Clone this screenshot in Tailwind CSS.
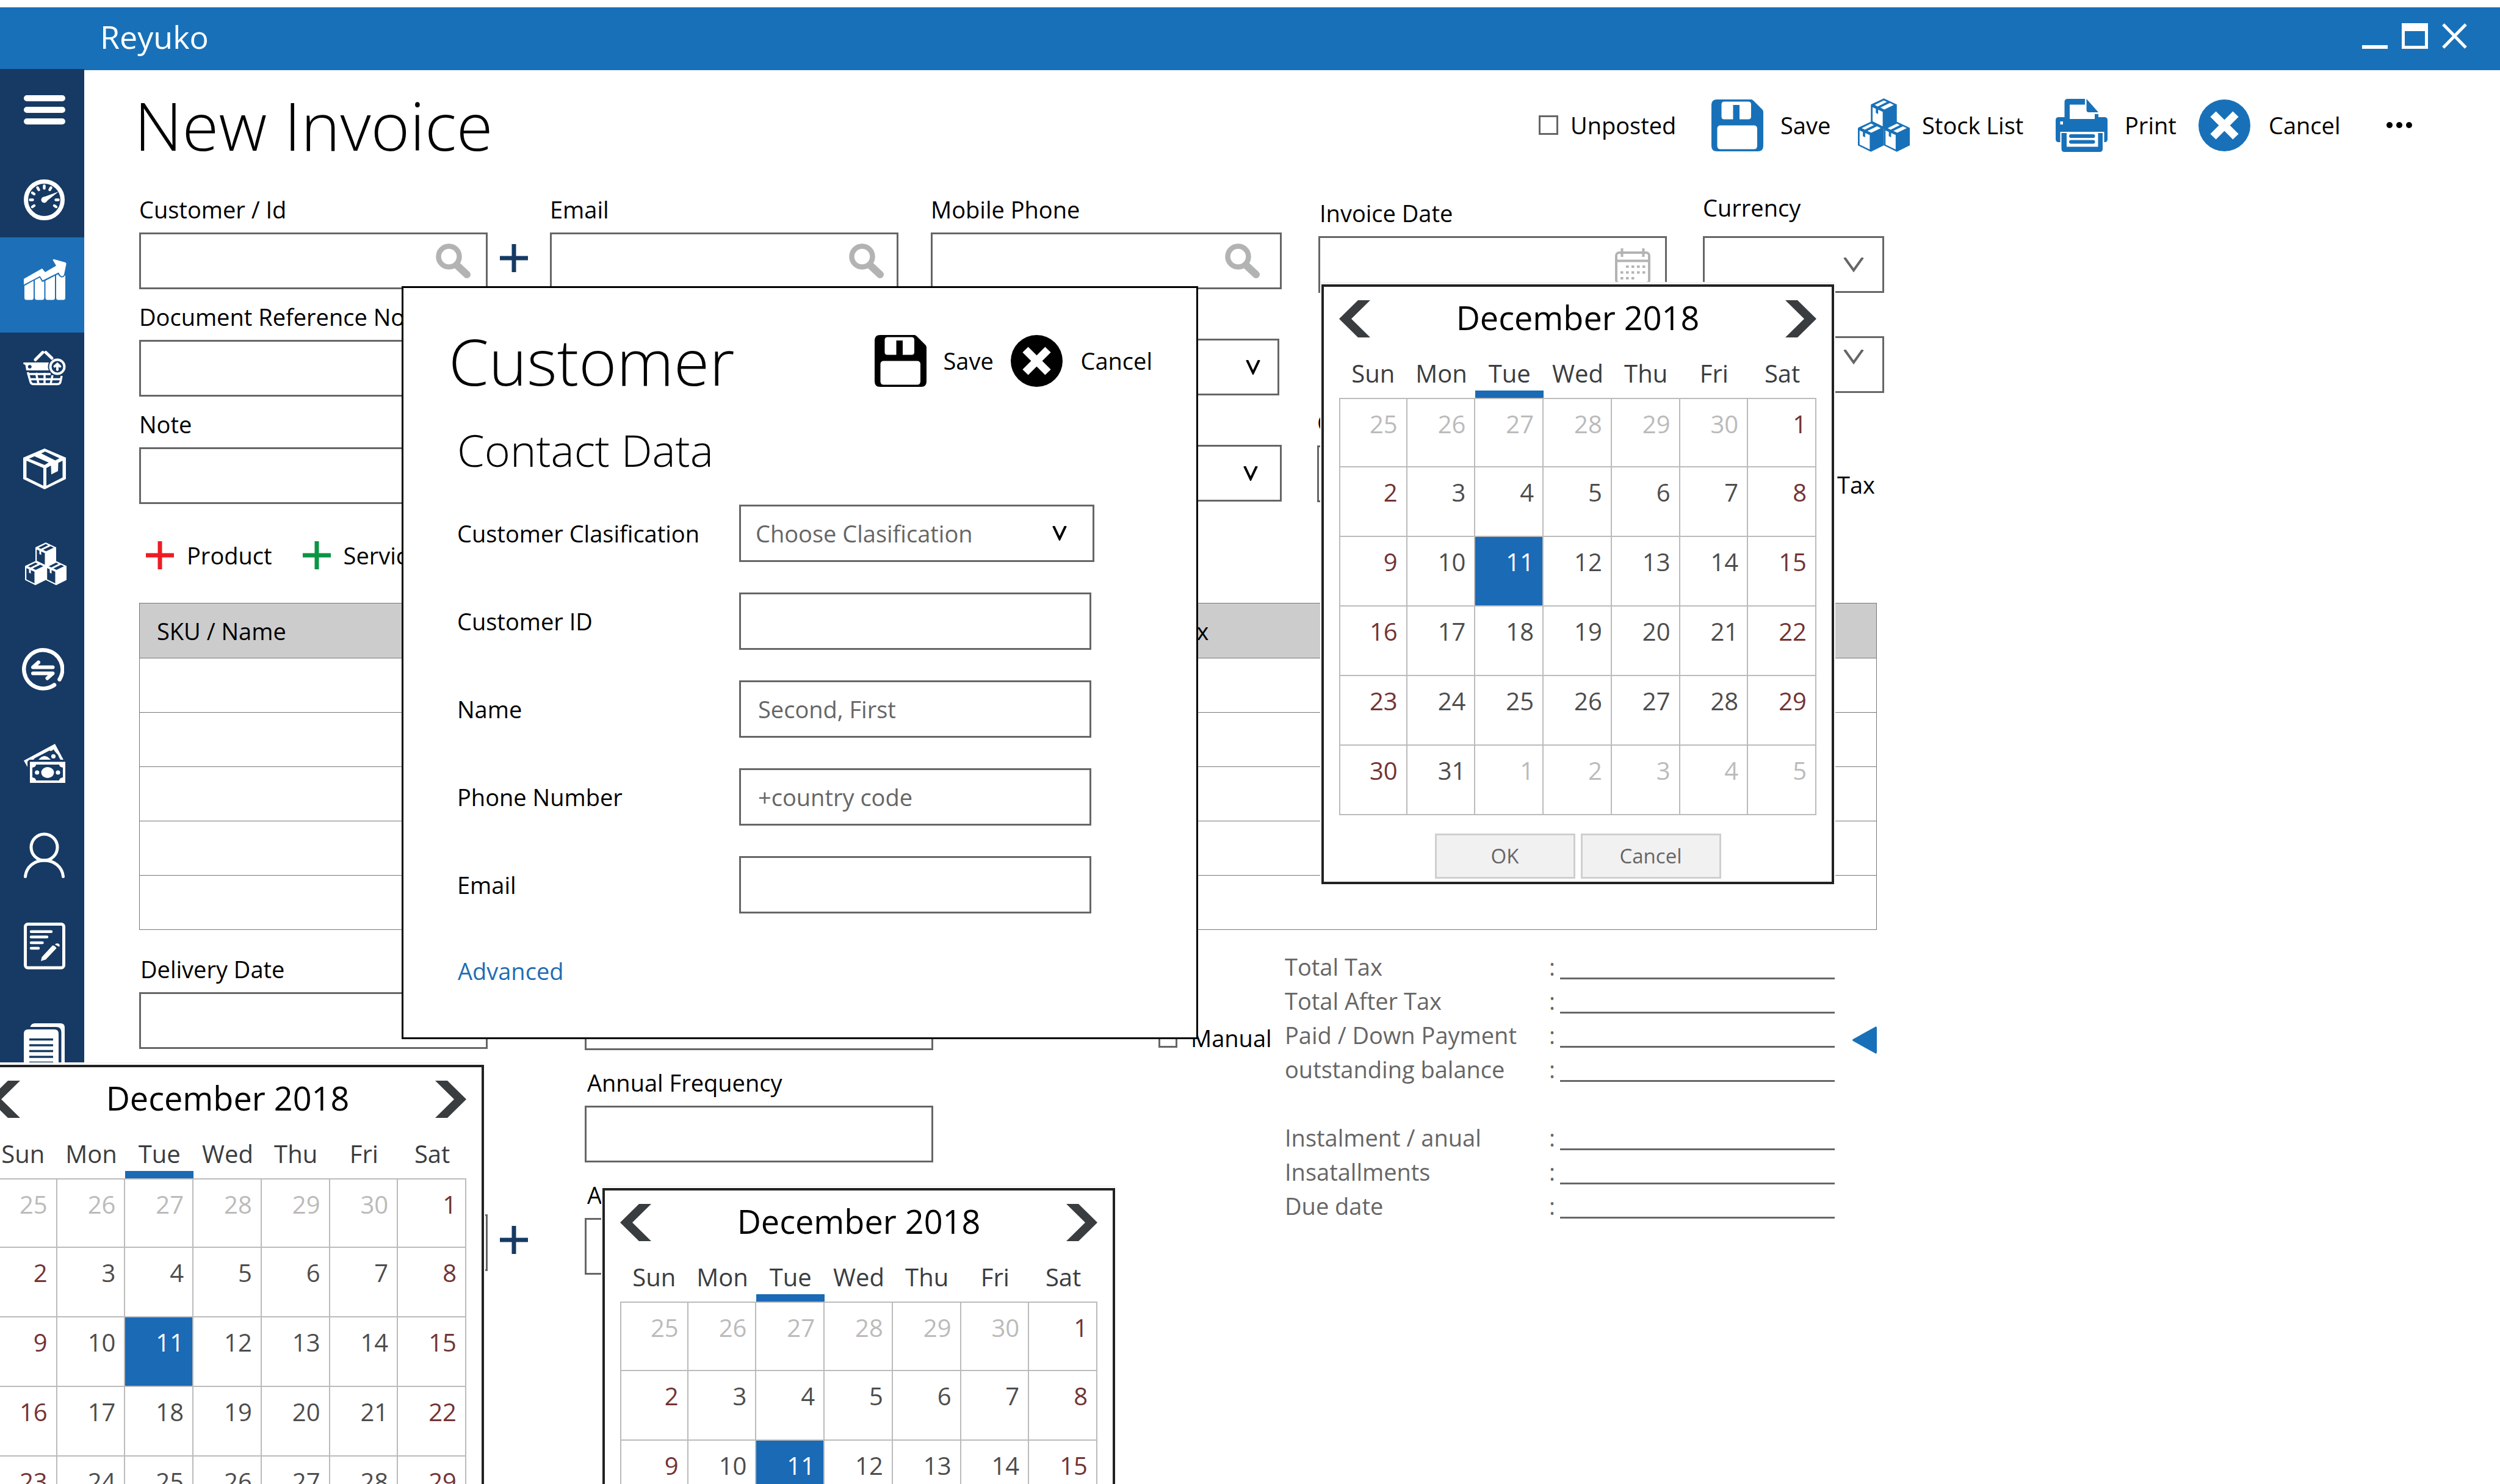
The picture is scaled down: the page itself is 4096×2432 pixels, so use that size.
<!DOCTYPE html>
<html lang="en">
<head>
<meta charset="utf-8">
<title>Reyuko - New Invoice</title>
<script src="https://cdn.jsdelivr.net/npm/@tailwindcss/browser@4"></script>
</head>
<body class="bg-white">
<!-- icon library -->
<svg class="hidden" aria-hidden="true">
  <symbol id="i-menu" viewBox="0 0 68 48"><path d="M5 5H63M5 24H63M5 43H63" stroke="currentColor" stroke-width="10" stroke-linecap="round"/></symbol>
  <symbol id="i-gauge" viewBox="0 0 67 67">
    <circle cx="33.5" cy="33.5" r="30" fill="none" stroke="currentColor" stroke-width="7"/>
    <path d="M10.5 33.500h4M56.500 33.500h-4M33.500 10.500v4M14 22l3 2M14 45l3-2M53 45l-3-2M22.500 13.500l2 3.500M44.500 13.500l-2 3.500" stroke="currentColor" stroke-width="4.500" stroke-linecap="round"/>
    <path d="M31 29.500 57 20 37 36z" fill="currentColor"/><circle cx="33.500" cy="33.500" r="5" fill="currentColor"/>
  </symbol>
  <symbol id="i-chart" viewBox="0 0 70 67">
    <path fill="currentColor" d="M0 32 30 15 35 21 53 10.500 47.500 1Q48-.5 50 0L68 5Q70 6 69.500 8L66 25Q63 31 59 25L57 21.500 31 34.500 26.500 27.500 0 41.500z"/>
    <path fill="currentColor" d="M1 43.500 16 35V63Q16 66.500 12.500 66.500H4.500Q1 66.500 1 63zM18 34 26 30 30 37 33.500 36V63Q33.500 66.500 30 66.500H22Q18 66.500 18 63zM35.500 35 51 27V63Q51 66.500 47.500 66.500H39Q35.500 66.500 35.500 63zM53 26 56 24.500Q62 34 68 26V63Q68 66.500 64.500 66.500H56.500Q53 66.500 53 63z"/>
  </symbol>
  <symbol id="i-basket" viewBox="0 0 70 57">
    <path d="M20 14.500 32 2.500M37 2.500 47 12" stroke="currentColor" stroke-width="5" stroke-linecap="round"/>
    <path fill="currentColor" fill-rule="evenodd" d="M1 19H42Q39 26 42 32H5L3.500 23 1 22Q-1 20 1 19zM10.700 23a3 3 0 1 0 .1 0z"/>
    <path fill="none" stroke="currentColor" stroke-width="3.500" d="M7.500 35 12 51Q13 54.500 17 54.500H56Q60 54.500 61 51L63 41M8 38H45M10 46.500H62M21 36 25 54M35 36V54M48 40 45 54"/>
    <circle cx="56" cy="26" r="11.500" fill="none" stroke="currentColor" stroke-width="4"/>
    <path fill="none" stroke="currentColor" stroke-width="4" stroke-linecap="round" d="M56 31V22M51.500 25.500 56 21.500 60.500 25.500"/>
  </symbol>
  <symbol id="i-box" viewBox="0 0 70 67"><path fill="currentColor" fill-rule="evenodd" d="M35 0 70 15V50L35 67 0 50V15zM5.400 20V47.500L33 61V32zM38 32V61L64.500 47.500V20L57.500 23.500 57 37 46 42.500 45.500 28zM9.500 16.700 35 27 41.700 23 18.500 12.700zM29.500 8 52.500 19.600 59.500 16 36 5z"/></symbol>
  <defs><path id="unit" fill-rule="evenodd" d="M17 0 34 8V31L17 39.500 0 31V8zM2.200 11.500V30L15.500 36.500V17.500L9.500 14.800V20.500L6.500 19V13.500zM5 8.500 9 10.500 21 4.500 17 2.500zM12.500 12 17.500 14.500 30 8.500 25 6z"/></defs>
  <symbol id="i-crates" viewBox="0 0 68 70">
    <g fill="currentColor">
      <use href="#unit" x="17" y="0"/><use href="#unit" x="0" y="30.500"/><use href="#unit" x="34" y="30.500"/>
    </g>
  </symbol>
  <symbol id="i-exchange" viewBox="0 0 69 71"><path fill="none" stroke="currentColor" stroke-width="6.500" stroke-linecap="round" stroke-linejoin="round" d="M61.500 51.500A31.500 31.500 0 1 0 53 60.500"/><path fill="none" stroke="currentColor" stroke-width="6" stroke-linecap="round" stroke-linejoin="round" d="M50.500 31.500H18L27 23.500M18 41.500H50.500L41.500 49.500"/></symbol>
  <symbol id="i-money" viewBox="0 0 68 64">
    <path fill="currentColor" fill-rule="evenodd" d="M0 27.500 51 0 65 26H60Q57 21 56 18 50 12 49 9 45 13 42 11L18 23.500 16 26H9L6 29V38z"/>
    <path fill="currentColor" d="M24 26Q34 14 44 26z"/><circle cx="48.500" cy="20.500" r="3.600" fill="currentColor"/>
    <path fill="currentColor" fill-rule="evenodd" d="M10 29.500H68V64H10zM20 34Q20 38 14 39V55Q20 56 20 60H58Q58 56 64 55V39Q58 38 58 34z"/>
    <ellipse cx="39" cy="47" rx="10.500" ry="9" fill="currentColor"/><circle cx="21.700" cy="47" r="3.600" fill="currentColor"/><circle cx="56" cy="47" r="3.600" fill="currentColor"/>
  </symbol>
  <symbol id="i-person" viewBox="0 0 67 75"><g fill="none" stroke="currentColor" stroke-width="5" stroke-linecap="round"><circle cx="33.500" cy="24.500" r="21.500"/><path d="M2.500 72.500C4 57 17 46 33.500 46S63 57 64.500 72.500"/></g></symbol>
  <symbol id="i-note" viewBox="0 0 68 77">
    <rect x="2.500" y="2.500" width="63" height="71.500" rx="4" fill="none" stroke="currentColor" stroke-width="5"/>
    <path d="M12 14.700H45M12 23.500H38M12 33H30.500M12 42H24" stroke="currentColor" stroke-width="4.500" stroke-linecap="round"/>
    <path fill="currentColor" d="M28 63 29.500 56.500 47 37.500Q51 37 53.500 42L36 60.500zM51 36Q53 33 57 34.500 60 37 58 39.500z"/>
  </symbol>
  <symbol id="i-docs" viewBox="0 0 67 84">
    <path fill="currentColor" d="M10.500 6Q12 0 18 0H60Q67 0 67 7V84H61.500V15Q61.500 6 53 6z"/>
    <path fill="currentColor" fill-rule="evenodd" d="M0 17Q0 10 7 10H50Q57 10 57 17V84H0zM9 24.700V28.300H48V24.700zM9 34.200V37.800H48V34.200zM9 43.700V47.300H48V43.700zM9 53.200V56.800H48V53.200zM9 62.700V66.300H48V62.700z"/>
  </symbol>
  <symbol id="i-save" viewBox="0 0 85 85"><path fill="currentColor" fill-rule="evenodd" d="M9 0H66L69 2 84 17 85 20V76Q85 85 76 85H9Q0 85 0 76V9Q0 0 9 0zM21 3.500Q16.500 3.500 16.500 8V28Q16.500 32.500 21 32.500H60.500Q65 32.500 65 28V8Q65 3.500 60.500 3.500zM35.500 9H46V32.500H35.500zM15 42.500Q9.500 42.500 9.500 48V76Q9.500 81.500 15 81.500H69.500Q75 81.500 75 76V48Q75 42.500 69.500 42.500z"/></symbol>
  <symbol id="i-print" viewBox="0 0 85 87">
    <path fill="currentColor" fill-rule="evenodd" d="M5 30H14.500V5Q14.500 0 20 0H48V9.500H23V33H64V25H70V30H80Q85 30 85 35V66Q85 71 80 71H79.500V54H7.500V71H5Q0 71 0 66V35Q0 30 5 30zM7.500 37V42H12V37z"/>
    <path fill="currentColor" d="M50.500 0 70 22H54Q50.500 22 50.500 18z"/>
    <path fill="currentColor" d="M9.500 56H18V78.500H69.500V56H77V82Q77 87 72 87H14.500Q9.500 87 9.500 82z"/>
    <path stroke="currentColor" stroke-width="6" stroke-linecap="round" d="M25 61H61.500M25 70.500H61.500"/>
  </symbol>
  <symbol id="i-cancel" viewBox="0 0 85 85"><circle cx="42.500" cy="42.500" r="42.500" fill="currentColor"/><path d="M24 24 61 61M61 24 24 61" stroke="#fff" stroke-width="13"/></symbol>
  <symbol id="i-search" viewBox="0 0 58 58"><circle cx="21.500" cy="21.500" r="17" fill="none" stroke="currentColor" stroke-width="8.500"/><path d="M35 36 51 51" stroke="currentColor" stroke-width="12" stroke-linecap="round"/></symbol>
  <symbol id="i-date" viewBox="0 0 58 60"><g fill="none" stroke="currentColor" stroke-width="4"><rect x="2" y="7" width="54" height="50" rx="5"/><path d="M2 20.500H56M11.500 0V14M46.500 0V14"/><path stroke-dasharray="4.500 4.500" d="M18 30H50M9 39.500H50M9 49H32"/></g></symbol>
  <symbol id="i-plus" viewBox="0 0 46 46"><path d="M23 0V46M0 23H46" stroke="currentColor" stroke-width="7"/></symbol>
  <symbol id="i-vee" viewBox="0 0 24 24"><path fill="none" stroke="currentColor" stroke-width="4" d="M2 0 12 21 22 0"/></symbol>
  <symbol id="i-vee-wide" viewBox="0 0 34 24"><path fill="none" stroke="currentColor" stroke-width="4" d="M2 0 17 21 32 0"/></symbol>
  <symbol id="i-prev" viewBox="0 0 51 61"><path fill="currentColor" d="M31 0H51L20 30.500 51 61H31L0 30.500z"/></symbol>
  <symbol id="i-next" viewBox="0 0 51 61"><path fill="currentColor" d="M20 0H0L31 30.500 0 61H20L51 30.500z"/></symbol>
</svg>

<div class="relative h-screen overflow-hidden bg-white pt-3 font-['Open_Sans','Noto_Sans',sans-serif] text-[38px] leading-[48px] text-black">

  <!-- title bar -->
  <header class="flex h-[103px] items-center justify-between bg-[#1871b8] pl-[164px] pr-[54px] text-white">
    <span class="pb-2 text-[52px] leading-[64px]">Reyuko</span>
    <div class="flex gap-[23px] pb-[10px]">
      <button aria-label="Minimise" class="flex h-[42px] w-[42px] items-end"><span class="h-[6px] w-full bg-white"></span></button>
      <button aria-label="Maximise" class="h-[42px] w-[43px] border-[5px] border-t-[13px] border-white"></button>
      <button aria-label="Close" class="h-[42px] w-[41px]"><svg viewBox="0 0 41 42" class="h-[42px] w-[41px]"><path d="M2 2 39 40M39 2 2 40" stroke="currentColor" stroke-width="5"/></svg></button>
    </div>
  </header>

  <div class="flex">
    <!-- side navigation -->
    <nav class="-mt-[2px] h-screen w-[138px] shrink-0 bg-[#163a64] text-white">
      <ul class="flex flex-col">
        <li><a href="#" aria-label="Menu" class="block pl-[39px] pt-[43px]"><svg class="h-[48px] w-[68px]"><use href="#i-menu"/></svg></a></li>
        <li><a href="#" aria-label="Dashboard" class="block pb-[28px] pl-[39px] pt-[90px]"><svg class="h-[67px] w-[67px]"><use href="#i-gauge"/></svg></a></li>
        <li><a href="#" aria-label="Sales" class="block bg-[#1d70b8] pb-[53px] pl-[39px] pt-[36px]"><svg class="h-[67px] w-[70px]"><use href="#i-chart"/></svg></a></li>
        <li class="mt-[30px]"><a href="#" aria-label="Purchases" class="block pl-[38px]"><svg class="h-[57px] w-[70px]"><use href="#i-basket"/></svg></a></li>
        <li class="mt-[103px]"><a href="#" aria-label="Products" class="block pl-[38px]"><svg class="h-[67px] w-[70px]"><use href="#i-box"/></svg></a></li>
        <li class="mt-[87px]"><a href="#" aria-label="Stock" class="block pl-[41px]"><svg class="h-[70px] w-[68px]"><use href="#i-crates"/></svg></a></li>
        <li class="mt-[103px]"><a href="#" aria-label="Transfers" class="block pl-[36px]"><svg class="h-[71px] w-[69px]"><use href="#i-exchange"/></svg></a></li>
        <li class="mt-[86px]"><a href="#" aria-label="Payments" class="block pl-[39px]"><svg class="h-[64px] w-[68px]"><use href="#i-money"/></svg></a></li>
        <li class="mt-[81px]"><a href="#" aria-label="Contacts" class="block pl-[39px]"><svg class="h-[75px] w-[67px]"><use href="#i-person"/></svg></a></li>
        <li class="mt-[73px]"><a href="#" aria-label="Notes" class="block pl-[39px]"><svg class="h-[77px] w-[68px]"><use href="#i-note"/></svg></a></li>
        <li class="mt-[88px]"><a href="#" aria-label="Reports" class="block pl-[39px]"><svg class="h-[84px] w-[67px]"><use href="#i-docs"/></svg></a></li>
      </ul>
    </nav>

    <main class="min-w-0 flex-1">
      <div class="flex h-[180px] items-center justify-between pl-[82px] pr-[144px]">
        <h1 class="text-[109px] font-light leading-[140px]">New Invoice</h1>
        <div class="grid grid-cols-[283px_240px_324px_234px_308px_auto] items-center">
          <label class="flex items-center gap-5"><input type="checkbox" class="h-8 w-8 appearance-none border-[3px] border-[#666]">Unposted</label>
          <button class="flex items-center gap-7"><svg class="h-[85px] w-[85px] text-[#1871b8]"><use href="#i-save"/></svg>Save</button>
          <button class="flex items-center gap-5"><svg class="h-[88px] w-[85px] text-[#1871b8]"><use href="#i-crates"/></svg>Stock List</button>
          <button class="flex items-center gap-7"><svg class="h-[87px] w-[85px] text-[#1871b8]"><use href="#i-print"/></svg>Print</button>
          <button class="flex items-center gap-[30px]"><svg class="h-[85px] w-[85px] text-[#1871b8]"><use href="#i-cancel"/></svg>Cancel</button>
          <button aria-label="More" class="flex gap-[6px]"><span class="size-[10px] rounded-full bg-black"></span><span class="size-[10px] rounded-full bg-black"></span><span class="size-[10px] rounded-full bg-black"></span></button>
        </div>
      </div>

      <div class="max-w-[2949px] pl-[90px]">
        <form class="mt-6 grid grid-cols-[673fr_624fr_635fr_630fr_297fr]">
          <div class="flex flex-col gap-[21px]">
            <div class="flex items-end gap-5">
              <div class="flex w-[571px] flex-col gap-[14px]">
                <label for="customer">Customer / Id</label>
                <div class="flex h-[93px] items-center border-[3px] border-[#666] pr-6"><input id="customer" class="h-full min-w-0 flex-1 px-6 outline-none"><svg class="size-[58px] text-[#b2b4b4]"><use href="#i-search"/></svg></div>
              </div>
              <button type="button" aria-label="Add customer" class="mb-7"><svg class="size-[46px] text-[#163a64]"><use href="#i-plus"/></svg></button>
            </div>
            <div class="flex w-[571px] flex-col gap-[14px]"><label for="docref">Document Reference No</label><input id="docref" class="h-[93px] border-[3px] border-[#666] px-6"></div>
            <div class="flex w-[571px] flex-col gap-[14px]"><label for="note">Note</label><input id="note" class="h-[93px] border-[3px] border-[#666] px-6"></div>
          </div>
          <div class="flex w-[571px] flex-col gap-[14px]">
            <label for="email">Email</label>
            <div class="flex h-[93px] items-center border-[3px] border-[#666] pr-5"><input id="email" type="email" class="h-full min-w-0 flex-1 px-6 outline-none"><svg class="size-[58px] text-[#b2b4b4]"><use href="#i-search"/></svg></div>
          </div>
          <div class="flex w-[575px] flex-col gap-[19px]">
            <div class="flex flex-col gap-[14px]">
              <label for="mobile">Mobile Phone</label>
              <div class="flex h-[93px] items-center border-[3px] border-[#666] pr-8"><input id="mobile" type="tel" class="h-full min-w-0 flex-1 px-6 outline-none"><svg class="size-[58px] text-[#b2b4b4]"><use href="#i-search"/></svg></div>
            </div>
            <div class="flex flex-col gap-[14px]">
              <label for="warehouse">Warehouse</label>
              <div class="flex h-[93px] w-[571px] items-center border-[3px] border-[#666] pr-[28px]"><select id="warehouse" class="h-full min-w-0 flex-1 appearance-none px-6"></select><svg class="size-[24px]"><use href="#i-vee"/></svg></div>
            </div>
            <div class="flex flex-col gap-[14px]">
              <label for="terms">Terms</label>
              <div class="flex h-[93px] items-center border-[3px] border-[#666] pr-9"><select id="terms" class="h-full min-w-0 flex-1 appearance-none px-6"></select><svg class="size-[24px]"><use href="#i-vee"/></svg></div>
            </div>
          </div>
          <div class="flex w-[571px] flex-col gap-[188px] pt-[6px]">
            <div class="flex flex-col gap-[14px]">
              <label for="invdate" class="pl-[2px]">Invoice Date</label>
              <div class="flex h-[93px] items-center border-[3px] border-[#666] pr-6"><input id="invdate" class="h-full min-w-0 flex-1 px-6 outline-none"><svg class="mb-[-6px] h-[60px] w-[58px] text-[#b2b4b4]"><use href="#i-date"/></svg></div>
            </div>
            <div class="-ml-[2px] flex flex-col gap-[14px]"><label for="cost">Cost Center</label><input id="cost" class="h-[93px] border-[3px] border-[#666] px-6"></div>
          </div>
          <div class="-mt-[3px] flex flex-col">
            <div class="flex flex-col gap-[23px]">
              <label for="currency">Currency</label>
              <div class="flex h-[93px] items-center border-[3px] border-[#666] pr-[30px]"><select id="currency" class="h-full min-w-0 flex-1 appearance-none px-6"></select><svg class="h-[24px] w-[34px] text-[#666]"><use href="#i-vee-wide"/></svg></div>
            </div>
            <div class="mt-[71px] flex h-[93px] items-start border-[3px] border-[#666] pr-[30px] pt-[19px]"><select aria-label="Price list" class="h-full min-w-0 flex-1 appearance-none px-6"></select><svg class="h-[24px] w-[34px] text-[#666]"><use href="#i-vee-wide"/></svg></div>
            <span class="mt-[126px] pl-[220px]">Tax</span>
          </div>
        </form>

        <div class="mb-[54px] mt-[60px] flex h-12 items-center gap-[50px] pl-[11px]">
          <button class="flex items-center gap-[21px]"><svg class="size-[46px] text-[#ed1c24]"><use href="#i-plus"/></svg>Product</button>
          <button class="flex items-center gap-[21px]"><svg class="size-[46px] text-[#0b9444]"><use href="#i-plus"/></svg>Service</button>
        </div>

        <div class="pr-3">
          <table class="w-full table-fixed border border-[#777] text-left">
            <thead><tr class="h-[90px] border-b border-[#777] bg-[#ccc]"><th class="w-[1690px] pl-[28px] font-normal">SKU / Name</th><th class="font-normal">Tax</th></tr></thead>
            <tbody>
              <tr class="h-[89px] border-b border-[#777]"><td></td><td></td></tr>
              <tr class="h-[89px] border-b border-[#777]"><td></td><td></td></tr>
              <tr class="h-[89px] border-b border-[#777]"><td></td><td></td></tr>
              <tr class="h-[89px] border-b border-[#777]"><td></td><td></td></tr>
              <tr class="h-[89px] border-b border-[#777]"><td></td><td></td></tr>
            </tbody>
          </table>
        </div>

        <div class="mt-8 grid grid-cols-[730px_940px_207px_930px_auto]">
          <div class="flex flex-col gap-[209px] pt-2">
            <div class="flex w-[571px] flex-col gap-[14px]"><label for="delivery" class="pl-[2px]">Delivery Date</label><input id="delivery" class="h-[93px] border-[3px] border-[#666] px-6"></div>
            <div class="flex items-end gap-5">
              <div class="flex w-[571px] flex-col gap-[14px]"><label for="salesman">Salesman</label><input id="salesman" class="h-[93px] border-[3px] border-[#666] px-6"></div>
              <button aria-label="Add salesman" class="mb-7"><svg class="size-[46px] text-[#163a64]"><use href="#i-plus"/></svg></button>
            </div>
          </div>
          <div class="flex w-[571px] flex-col gap-[29px] pt-[10px]">
            <div class="flex flex-col gap-[14px]"><label for="method">Payment Method</label><input id="method" class="h-[93px] border-[3px] border-[#666] px-6"></div>
            <div class="flex flex-col gap-[14px]"><label for="freq" class="pl-[4px]">Annual Frequency</label><input id="freq" class="h-[93px] border-[3px] border-[#666] px-6"></div>
            <div class="flex flex-col gap-[14px]"><label for="rate" class="pl-[4px]">Annual Rate</label><input id="rate" class="h-[93px] border-[3px] border-[#666] px-6"></div>
          </div>
          <label class="flex items-center gap-[22px] self-start whitespace-nowrap pt-[121px]"><input type="checkbox" class="size-[31px] shrink-0 appearance-none border-[3px] border-[#666]">Manual</label>
          <dl class="w-[901px] leading-[56px] text-[#666]">
            <div class="flex h-14"><dt class="w-[433px]">Total Tax</dt><dd class="flex flex-1">:<span class="ml-2 h-[49px] flex-1 border-b-[3px] border-[#666]"></span></dd></div>
            <div class="flex h-14"><dt class="w-[433px]">Total After Tax</dt><dd class="flex flex-1">:<span class="ml-2 h-[49px] flex-1 border-b-[3px] border-[#666]"></span></dd></div>
            <div class="flex h-14"><dt class="w-[433px]">Paid / Down Payment</dt><dd class="flex flex-1">:<span class="ml-2 h-[49px] flex-1 border-b-[3px] border-[#666]"></span></dd></div>
            <div class="mb-14 flex h-14"><dt class="w-[433px]">outstanding balance</dt><dd class="flex flex-1">:<span class="ml-2 h-[49px] flex-1 border-b-[3px] border-[#666]"></span></dd></div>
            <div class="flex h-14"><dt class="w-[433px]">Instalment / anual</dt><dd class="flex flex-1">:<span class="ml-2 h-[49px] flex-1 border-b-[3px] border-[#666]"></span></dd></div>
            <div class="flex h-14"><dt class="w-[433px]">Insatallments</dt><dd class="flex flex-1">:<span class="ml-2 h-[49px] flex-1 border-b-[3px] border-[#666]"></span></dd></div>
            <div class="flex h-14"><dt class="w-[433px]">Due date</dt><dd class="flex flex-1">:<span class="ml-2 h-[49px] flex-1 border-b-[3px] border-[#666]"></span></dd></div>
          </dl>
          <button aria-label="Expand totals" class="self-start pt-[126px]"><svg viewBox="0 0 40 45" class="h-[45px] w-[40px]"><path fill="#1871b8" d="M37 1Q40-1 40 3V42Q40 46 37 44L1 24Q-1 22.500 1 21z"/></svg></button>
        </div>
      </div>
    </main>
  </div>

  <!-- customer dialog -->
  <section role="dialog" aria-labelledby="dlg-title" class="absolute left-[658px] top-[469px] w-[1305px] border-[3px] border-black bg-white pb-[85px] pt-[59px]">
    <div class="flex h-[120px] items-center justify-between pl-[74px] pr-[72px]">
      <h2 id="dlg-title" class="text-[106px] font-light leading-[120px]">Customer</h2>
      <div class="grid grid-cols-[223px_auto]">
        <button class="flex items-center gap-7"><svg class="size-[85px]"><use href="#i-save"/></svg>Save</button>
        <button class="flex items-center gap-[30px]"><svg class="size-[85px]"><use href="#i-cancel"/></svg>Cancel</button>
      </div>
    </div>
    <h3 class="mt-[46px] pl-[88px] text-[72px] font-light leading-[80px]">Contact Data</h3>
    <form class="mt-[50px] flex flex-col gap-[50px] pl-[88px]">
      <div class="flex items-center"><label for="c-class" class="w-[462px]">Customer Clasification</label>
        <div class="flex h-[94px] w-[582px] items-center border-[3px] border-[#666] pr-[42px]"><select id="c-class" class="h-full min-w-0 flex-1 appearance-none px-6 text-[#666]"><option>Choose Clasification</option></select><svg class="size-[24px]"><use href="#i-vee"/></svg></div></div>
      <div class="flex items-center"><label for="c-id" class="w-[462px]">Customer ID</label><input id="c-id" class="h-[94px] w-[577px] border-[3px] border-[#666] px-7"></div>
      <div class="flex items-center"><label for="c-name" class="w-[462px]">Name</label><input id="c-name" placeholder="Second, First" class="h-[94px] w-[577px] border-[3px] border-[#666] px-7 placeholder:text-[#666]"></div>
      <div class="flex items-center"><label for="c-phone" class="w-[462px]">Phone Number</label><input id="c-phone" placeholder="+country code" class="h-[94px] w-[577px] border-[3px] border-[#666] px-7 placeholder:text-[#666]"></div>
      <div class="flex items-center"><label for="c-mail" class="w-[462px]">Email</label><input id="c-mail" class="h-[94px] w-[577px] border-[3px] border-[#666] px-7"></div>
    </form>
    <a href="#" class="ml-[89px] mt-[70px] block text-[#1f6db5]">Advanced</a>
  </section>

  <!-- date pickers -->
  <section data-calendar aria-label="Invoice date picker" class="absolute left-[2165px] top-[466px] w-[840px] border-4 border-[#222] bg-white px-[25px] pb-[5px] pt-5 shadow-[0_0_0_2px_#fff,0_-3px_0_1px_#f3f5f5]"></section>
  <section data-calendar aria-label="Delivery date picker" class="absolute left-[-47px] top-[1745px] w-[840px] border-4 border-[#222] bg-white px-[25px] pb-[5px] pt-5 shadow-[0_0_0_2px_#fff,0_-3px_0_1px_#f3f5f5]"></section>
  <section data-calendar aria-label="Due date picker" class="absolute left-[987px] top-[1947px] w-[840px] border-4 border-[#222] bg-white px-[25px] pb-[5px] pt-5 shadow-[0_0_0_2px_#fff,0_-3px_0_1px_#f3f5f5]"></section>
</div>

<script>
  // Six weeks around December 2018, starting on Sunday the 25th of November.
  const start = new Date(2018, 10, 25);
  const names = ['Sun', 'Mon', 'Tue', 'Wed', 'Thu', 'Fri', 'Sat'];
  const head = names.map(n =>
    `<th class="h-[68px] p-0 align-top text-[40px] font-normal leading-[56px] text-[#3a3d40] ${n === 'Tue' ? 'border-b-[12px] border-[#1a6ab5]' : ''}">${n}</th>`).join('');
  let rows = '';
  for (let w = 0; w < 6; w++) {
    rows += '<tr>';
    for (let d = 0; d < 7; d++) {
      const day = new Date(start.getFullYear(), start.getMonth(), start.getDate() + w * 7 + d);
      const inMonth = day.getMonth() === 11;
      const picked = inMonth && day.getDate() === 11;
      const tone = picked ? 'bg-[#1a6ab5] text-white' : !inMonth ? 'text-[#bbb]' : d === 0 || d === 6 ? 'text-[#733434]' : 'text-[#4d4d4d]';
      const edge = (d === 0 ? 'border-l-2 ' : '') + (w === 0 ? 'border-t-2' : '');
      rows += `<td class="h-[114px] border-b-2 border-r-2 border-[#bbb] pb-0 pl-0 pr-[14px] pt-[17px] text-right align-top text-[40px] leading-[48px] ${tone} ${edge}">${day.getDate()}</td>`;
    }
    rows += '</tr>';
  }
  for (const el of document.querySelectorAll('[data-calendar]')) {
    el.innerHTML = `
      <div class="flex h-16 items-center justify-between text-[#3a3d40]">
        <button aria-label="Previous month"><svg class="h-[61px] w-[51px]"><use href="#i-prev"/></svg></button>
        <span class="pb-1 text-[54px] leading-[60px] text-black">December 2018</span>
        <button aria-label="Next month"><svg class="h-[61px] w-[51px]"><use href="#i-next"/></svg></button>
      </div>
      <table class="mt-[30px] w-full table-fixed border-separate border-spacing-0"><thead><tr>${head}</tr></thead><tbody>${rows}</tbody></table>
      <div class="mt-[30px] flex justify-center gap-[9px] text-[33px] text-[#666]">
        <button class="h-[74px] w-[230px] border-[3px] border-[#cfcfcf] bg-[#f1f1f1]">OK</button>
        <button class="h-[74px] w-[230px] border-[3px] border-[#cfcfcf] bg-[#f1f1f1]">Cancel</button>
      </div>`;
  }
</script>
</body>
</html>
